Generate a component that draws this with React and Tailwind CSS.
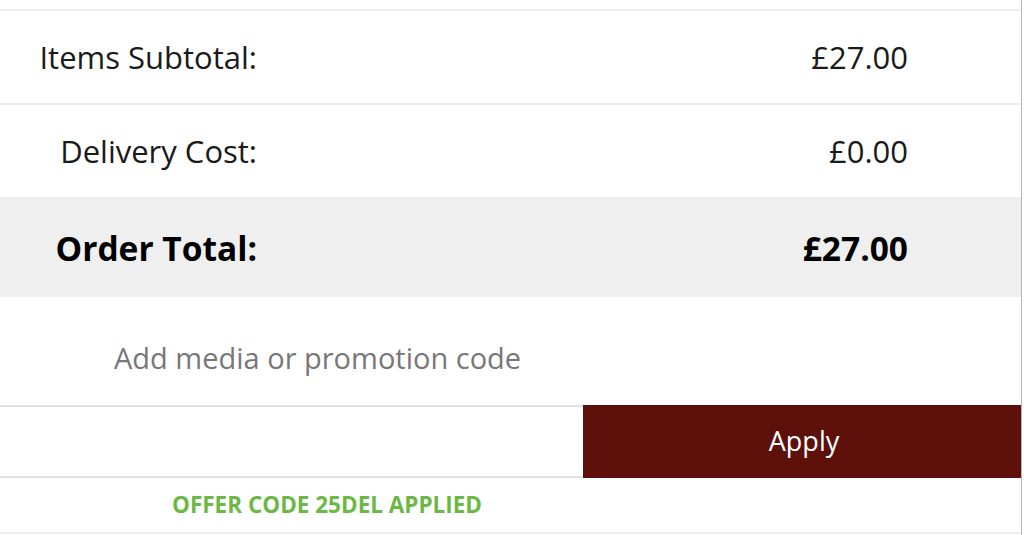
const rows = [
  { label: 'Items Subtotal:', value: '£27.00' },
  { label: 'Delivery Cost:', value: '£0.00' },
];

const App = () => {
  return (
    <div
      className="w-[1024px] h-[535px] bg-white overflow-hidden"
      style={{ fontFamily: '"Open Sans", "Liberation Sans", sans-serif' }}
    >
      <div className="w-[1022px] h-full border-r border-[#b5b5b5] flex flex-col">
        <div className="h-[9px]" />

        {/* Summary rows */}
        <div className="border-t-2 border-[#eeeeee]">
          {rows.map((row) => (
            <div
              key={row.label}
              className="h-[94px] flex items-center border-b-2 border-[#eeeeee] text-[31px] text-[#1a1a1a]"
            >
              <div className="w-[257px] text-right whitespace-nowrap">{row.label}</div>
              <div className="w-[651px] text-right">{row.value}</div>
            </div>
          ))}
          <div className="h-[98px] flex items-center bg-[#efefef] text-[33.5px] font-bold text-black">
            <div className="w-[257px] text-right whitespace-nowrap">Order Total:</div>
            <div className="w-[651px] text-right">£27.00</div>
          </div>
        </div>

        {/* Promotion code */}
        <div className="h-[108px] flex items-center pt-[14px] pl-[114px]">
          <input
            type="text"
            placeholder="Add media or promotion code"
            className="w-[600px] bg-transparent outline-none text-[29px] text-[#333] placeholder:text-[#777777]"
          />
        </div>
        <div className="flex h-[73px]">
          <div className="w-[583px] border-y-2 border-[#e2e2e2]" />
          <button className="flex-1 bg-[#5e100b] text-white text-[27px] pl-[4px]">Apply</button>
        </div>
        <div className="h-[56px] flex items-center border-b-2 border-[#eeeeee] pl-[172px]">
          <span className="text-[22.5px] font-bold text-[#6cb846] uppercase">Offer code 25DEL applied</span>
        </div>
      </div>
    </div>
  );
};

export default App;
